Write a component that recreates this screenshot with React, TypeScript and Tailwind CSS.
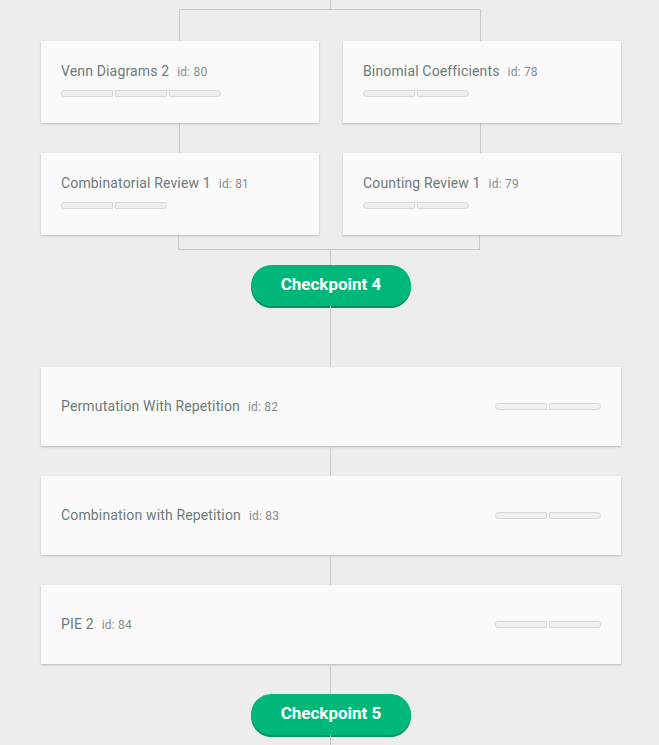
import React from "react";

const LINE = "bg-[#c9c9c9]";

function Bar({ n }: { n: number }) {
  return (
    <div className="flex gap-[2px]">
      {Array.from({ length: n }).map((_, i) => (
        <div
          key={i}
          className={
            "h-[7px] w-[52px] border border-[#d9d9d9] bg-[#efefef] " +
            (i === 0 ? "rounded-l-full " : "") +
            (i === n - 1 ? "rounded-r-full" : "")
          }
        />
      ))}
    </div>
  );
}

function Title({ title, id }: { title: string; id: number }) {
  return (
    <div className="flex items-baseline gap-[8px] leading-[20px]">
      <span className="text-[14px] tracking-[0.15px] text-[#6b7a7a]">{title}</span>
      <span className="text-[12px] tracking-[0.2px] text-[#878d8d]">id: {id}</span>
    </div>
  );
}

function SmallCard({ title, id, n }: { title: string; id: number; n: number }) {
  return (
    <div className="h-[82px] w-[278px] bg-[#fafafa] pl-[20px] pt-[20px] shadow-[0_1px_2px_rgba(0,0,0,0.22)]">
      <Title title={title} id={id} />
      <div className="mt-[8px]">
        <Bar n={n} />
      </div>
    </div>
  );
}

function WideCard({ title, id }: { title: string; id: number }) {
  return (
    <div className="ml-[41px] flex h-[79px] w-[580px] items-center justify-between bg-[#fafafa] pl-[20px] pr-[20px] shadow-[0_1px_2px_rgba(0,0,0,0.22)]">
      <Title title={title} id={id} />
      <Bar n={2} />
    </div>
  );
}

function VLine({ h }: { h: string }) {
  return <div className={`ml-[330px] w-px ${LINE} ${h}`} />;
}

function Checkpoint({ label }: { label: string }) {
  return (
    <div className="ml-[251px] flex h-[41px] w-[160px] items-center justify-center rounded-full bg-[#00b77a] pb-[1px] text-[17px] font-bold text-white shadow-[0_2px_0_#00925f]">
      {label}
    </div>
  );
}

export default function App() {
  return (
    <div
      className="h-[745px] w-[659px] overflow-hidden bg-[#ededed]"
      style={{ fontFamily: "Roboto, 'Liberation Sans', sans-serif" }}
    >
      <VLine h="h-[9px]" />
      <div className="ml-[179px] h-[32px] w-[302px] border-l border-r border-t border-[#c9c9c9]" />
      <div className="ml-[41px] flex gap-[24px]">
        <SmallCard title="Venn Diagrams 2" id={80} n={3} />
        <SmallCard title="Binomial Coefficients" id={78} n={2} />
      </div>
      <div className="ml-[179px] h-[30px] w-[302px] border-l border-r border-[#c9c9c9]" />
      <div className="ml-[41px] flex gap-[24px]">
        <SmallCard title="Combinatorial Review 1" id={81} n={2} />
        <SmallCard title="Counting Review 1" id={79} n={2} />
      </div>
      <div className="ml-[178px] h-[15px] w-[302px] border-b border-l border-r border-[#c9c9c9]" />
      <VLine h="h-[15px]" />
      <Checkpoint label="Checkpoint 4" />
      <VLine h="h-[61px]" />
      <WideCard title="Permutation With Repetition" id={82} />
      <VLine h="h-[30px]" />
      <WideCard title="Combination with Repetition" id={83} />
      <VLine h="h-[30px]" />
      <WideCard title="PIE 2" id={84} />
      <VLine h="h-[30px]" />
      <Checkpoint label="Checkpoint 5" />
      <VLine h="h-[12px]" />
    </div>
  );
}
